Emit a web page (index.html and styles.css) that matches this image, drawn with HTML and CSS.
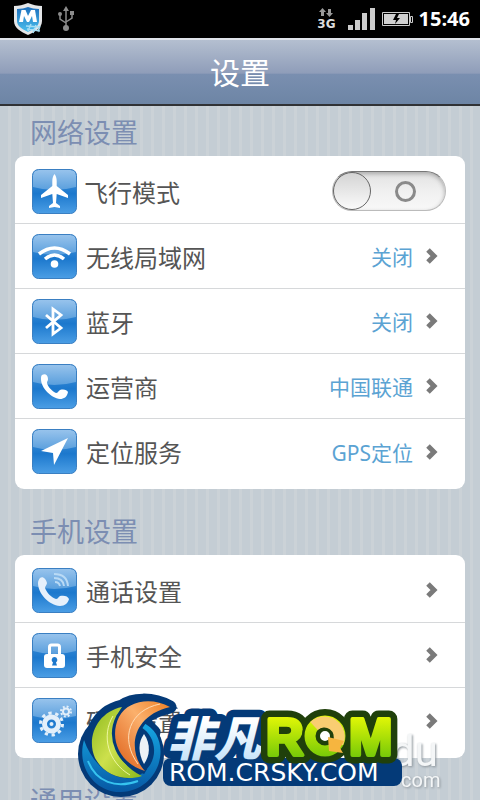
FILE: index.html
```
<!DOCTYPE html>
<html lang="zh-CN">
<head>
  <meta charset="utf-8">
  <meta name="viewport" content="width=device-width, initial-scale=1">
  <title>设置</title>
  <link rel="stylesheet" href="styles.css">
</head>
<body>
  <!-- Status bar -->
  <div class="status-bar">
    <svg class="shield" width="30" height="34" viewBox="0 0 30 34">
      <defs>
        <linearGradient id="shield-fill" x1="0" y1="0" x2="0" y2="1">
          <stop offset="0" stop-color="#1d6fbd"/>
          <stop offset="1" stop-color="#4bc0ee"/>
        </linearGradient>
      </defs>
      <path d="M1 4C6 4 10 3 15 1c5 2 9 3 14 3v15c0 7-7 11-14 14C8 30 1 26 1 19z" fill="#e4e6e8"/>
      <path d="M4 7c4 0 8-1 11-2 3 1 7 2 11 2v12c0 5-5 8-11 11C9 27 4 24 4 19z" fill="url(#shield-fill)"/>
      <path d="M6 20L8.500 8h4l2.500 6 3-6h4l2 12h-4l-1-6-3 6h-2l-3-6-1 6z" fill="#fff"/>
      <path d="M13 24l14 1M14 27l13 2M18 22l-3 7M23 23l-3 8M27 24l-2 6" stroke="#a5def5" stroke-width="1.500"/>
    </svg>
    <svg width="18" height="26" viewBox="0 0 18 26" fill="none" stroke="#8c8c8c" stroke-width="1.500">
      <path d="M9 3v18M3 9v4l6 4M15 8v4l-6 4"/>
      <path d="M9 0l3 5H6z" fill="#8c8c8c" stroke="none"/>
      <circle cx="9" cy="22" r="3" fill="#8c8c8c" stroke="none"/>
      <circle cx="3" cy="8" r="2" fill="#8c8c8c" stroke="none"/>
      <path d="M13 5h4v4h-4z" fill="#8c8c8c" stroke="none"/>
    </svg>
    <div class="status-right">
      <div class="network">
        <svg width="14" height="9" viewBox="0 0 14 9" fill="#999">
          <path d="M3.500 0L7 4H5v4H2V4H0zM10.500 9L7 5h2V1h3v4h2z"/>
        </svg>
        <span>3G</span>
      </div>
      <svg width="28" height="22" viewBox="0 0 28 22" fill="#ccc">
        <path d="M0 17h5v5H0zM7 12h5v10H7zM14 5h5v17h-5zM22 0h5v22h-5z"/>
      </svg>
      <svg width="31" height="16" viewBox="0 0 31 16">
        <path d="M.5 1.500h27v13H.5zM28.500 5.500h2v6h-2z" fill="none" stroke="#ccc"/>
        <path d="M2 3h24v10H2z" fill="#d0d0d0"/>
        <path d="M14 3l-3 6h3l-1 4 5-6h-3l2-4z" fill="#000"/>
      </svg>
      <span class="clock">15:46</span>
    </div>
  </div>

  <header class="title-bar">
    <h1>设置</h1>
  </header>

  <!-- Shared icon background -->
  <svg class="defs" width="0" height="0">
    <defs>
      <linearGradient id="tile-base" x1="0" y1="0" x2="0" y2="1">
        <stop offset="0" stop-color="#4d98dc"/>
        <stop offset=".55" stop-color="#1c78cd"/>
        <stop offset="1" stop-color="#4b9ee5"/>
      </linearGradient>
      <linearGradient id="tile-gloss" x1="0" y1="0" x2="0" y2="1">
        <stop offset="0" stop-color="#97c3ec"/>
        <stop offset="1" stop-color="#5a9fdd"/>
      </linearGradient>
      <symbol id="tile" viewBox="0 0 45 45">
        <rect x=".5" y=".5" width="44" height="44" rx="6" fill="url(#tile-base)"/>
        <path d="M1 18V7q0-6 6-6h31q6 0 6 6v11Q22 24 1 18z" fill="url(#tile-gloss)"/>
        <rect x=".5" y=".5" width="44" height="44" rx="6" fill="none" stroke="#3a7fc2"/>
      </symbol>
    </defs>
  </svg>

  <main class="settings">
    <h2>网络设置</h2>
    <div class="card">
      <div class="row row-switch">
        <svg class="icon" viewBox="0 0 45 45"><use href="#tile"/>
          <path d="M22.500 5c1.500 2 2.200 4 2.200 7v5L36 26v3l-11.300-4-.7 9 4 3v2l-5.500-1-5.500 1v-2l4-3-.7-9L9 29v-3l11.300-9v-5c0-3 .7-5 2.200-7z" fill="#fff"/></svg>
        <label for="airplane">飞行模式</label>
        <input type="checkbox" id="airplane" class="switch">
      </div>
      <a class="row" href="#">
        <svg class="icon" viewBox="0 0 45 45"><use href="#tile"/>
          <g fill="none" stroke="#fff" stroke-width="3.500"><path d="M7 20q15.500-12 31 0M13 25q9.500-8 19 0"/></g>
          <circle cx="22.500" cy="30" r="3.800" fill="#fff"/></svg>
        <span class="name">无线局域网</span>
        <span class="value">关闭</span>
        <svg class="arrow" viewBox="0 0 13 18"><path d="M3 3l6 6-6 6"/></svg>
      </a>
      <a class="row" href="#">
        <svg class="icon" viewBox="0 0 45 45"><use href="#tile"/>
          <path d="M14 16l15 13-8 6V10l8 6-15 13" fill="none" stroke="#fff" stroke-width="2.800"/></svg>
        <span class="name">蓝牙</span>
        <span class="value">关闭</span>
        <svg class="arrow" viewBox="0 0 13 18"><path d="M3 3l6 6-6 6"/></svg>
      </a>
      <a class="row" href="#">
        <svg class="icon" viewBox="0 0 45 45"><use href="#tile"/>
          <path d="M10 11c3-2 6 0 6 4 0 2-1 2-1 4 1 4 5 8 9 10 2 0 2-2 4-3 4-1 7 0 8 2-1 5-4 7-8 7C19 34 9 24 9 15c0-2 0-3 1-4z" fill="#fff"/></svg>
        <span class="name">运营商</span>
        <span class="value">中国联通</span>
        <svg class="arrow" viewBox="0 0 13 18"><path d="M3 3l6 6-6 6"/></svg>
      </a>
      <a class="row" href="#">
        <svg class="icon" viewBox="0 0 45 45"><use href="#tile"/>
          <path d="M36 9L22 36l-1-12L9 22z" fill="#fff"/></svg>
        <span class="name">定位服务</span>
        <span class="value">GPS定位</span>
        <svg class="arrow" viewBox="0 0 13 18"><path d="M3 3l6 6-6 6"/></svg>
      </a>
    </div>

    <h2>手机设置</h2>
    <div class="card">
      <a class="row" href="#">
        <svg class="icon" viewBox="0 0 45 45"><use href="#tile"/>
          <path d="M8 10c3-2 6 1 7 5 0 2-2 3-2 5 2 5 6 9 11 11 2 0 2-2 4-3 4-1 8 0 9 3-1 4-4 7-9 7C17 37 6 26 6 15c0-2 1-4 2-5z" fill="#e6f0fb"/>
          <g fill="none" stroke="#b9daf5" stroke-width="2"><path d="M22 6q13 0 14 12M22 10q9 0 10 8M23 14q4 0 5 4"/></g></svg>
        <span class="name">通话设置</span>
        <svg class="arrow" viewBox="0 0 13 18"><path d="M3 3l6 6-6 6"/></svg>
      </a>
      <a class="row" href="#">
        <svg class="icon" viewBox="0 0 45 45"><use href="#tile"/>
          <path d="M17.500 22v-8q0-2 2-2h6q2 0 2 2v8" fill="none" stroke="#fff" stroke-width="3"/>
          <rect x="12" y="21" width="21" height="14" rx="3" fill="#fff"/>
          <path d="M22.500 24a3 3 0 0 1 1.500 5.500l1 3h-5l1-3a3 3 0 0 1 1.500-5.500z" fill="#1c78cd"/></svg>
        <span class="name">手机安全</span>
        <svg class="arrow" viewBox="0 0 13 18"><path d="M3 3l6 6-6 6"/></svg>
      </a>
      <a class="row" href="#">
        <svg class="icon" viewBox="0 0 45 45"><use href="#tile"/>
          <g fill="none" stroke="#e3effa">
            <circle cx="19.500" cy="26" r="7" stroke-width="5"/>
            <circle cx="19.500" cy="26" r="11" stroke-width="3" stroke-dasharray="3.300 3.610"/>
            <circle cx="34" cy="13.500" r="3" stroke-width="2"/>
            <circle cx="34" cy="13.500" r="5" stroke-width="2" stroke-dasharray="1.930 2"/>
          </g>
          <circle cx="19.500" cy="26" r="2" fill="#e3effa"/></svg>
        <span class="name">硬件设置</span>
        <svg class="arrow" viewBox="0 0 13 18"><path d="M3 3l6 6-6 6"/></svg>
      </a>
    </div>

    <h2>通用设置</h2>
  </main>

  <!-- Site logos over the page -->
  <svg class="site-logo" width="376" height="110" viewBox="74 690 376 110">
    <defs>
      <linearGradient id="ice" x1="0" y1="0" x2="0" y2="1">
        <stop offset=".3" stop-color="#fff"/>
        <stop offset="1" stop-color="#b7dcf8"/>
      </linearGradient>
      <linearGradient id="lime" gradientUnits="userSpaceOnUse" x1="0" y1="714" x2="0" y2="758">
        <stop offset="0" stop-color="#e9fa06"/>
        <stop offset="1" stop-color="#74c808"/>
      </linearGradient>
      <linearGradient id="leaf" x1="0" y1="0" x2="1" y2="1">
        <stop offset="0" stop-color="#8dba1e"/>
        <stop offset=".5" stop-color="#cde04c"/>
        <stop offset="1" stop-color="#8ab91c"/>
      </linearGradient>
      <linearGradient id="orange" x1="1" y1="0" x2="0" y2="1">
        <stop offset="0" stop-color="#ee7f22"/>
        <stop offset=".4" stop-color="#fbb06c"/>
        <stop offset="1" stop-color="#dc5c16"/>
      </linearGradient>
      <linearGradient id="sea" x1="0" y1="0" x2="0" y2="1">
        <stop offset="0" stop-color="#16a9e4"/>
        <stop offset="1" stop-color="#0758a4"/>
      </linearGradient>
    </defs>

    <g class="baidu">
      <text x="391" y="766" font-size="42">du</text>
      <text x="401" y="787" font-size="20">com</text>
    </g>

    <path d="M122 706C96 712 86 738 94 758l50 14 10-40-12-12c6-6 16-10 28-13-18-10-38-8-48-1z" fill="#043a78" stroke="#043a78" stroke-width="13" stroke-linejoin="round"/>
    <circle cx="121" cy="754" r="43" fill="#043a78"/>
    <path d="M84 740c-8 28 12 53 37 52 32-1 48-35 35-58-3-5-8-9-14-12l-1 5c13 8 17 25 9 38-16 25-53 13-66-25z" fill="url(#sea)"/>
    <path d="M88 761c8 21 28 28 50 20" fill="none" stroke="#36c3ef" stroke-width="2"/>
    <path d="M144 734c-6 8-6 19 0 30 6-8 7-20 0-30z" fill="#edf2f6"/>
    <path d="M122 707C97 712 86 738 95 758c9 17 29 24 47 18-25-11-38-43-20-69z" fill="url(#leaf)"/>
    <path d="M113 716c-12 20-5 46 17 59" fill="none" stroke="#eef7a0"/>
    <path d="M170 707c-18-10-42-7-51 10-10 20-1 46 26 54-16-16-17-54 25-64z" fill="url(#orange)" stroke="#043a78" stroke-width="6" paint-order="stroke"/>
    <path d="M160 704c-30 6-41 34-22 60" fill="none" stroke="#ffdcb4"/>

    <rect x="163" y="758" width="239" height="28" rx="8" fill="#043a78"/>
    <text class="cn" x="167" y="756" fill="url(#ice)" stroke="#043a78" stroke-width="15">非凡</text>
    <g class="rom" stroke="#20400b" stroke-width="17">
      <text x="266" y="755">R</text>
      <circle cx="325" cy="736" r="17" fill="none" stroke-width="20"/>
      <text x="349" y="755">M</text>
    </g>
    <g class="rom" fill="url(#lime)" stroke="url(#lime)" stroke-width="4">
      <text x="266" y="755">R</text>
      <circle cx="325" cy="736" r="14" fill="#fff" stroke="#20400b" stroke-width="18"/>
      <circle cx="325" cy="736" r="15" fill="none" stroke-width="11"/>
      <text x="349" y="755">M</text>
    </g>
    <path d="M314 726a15 15 0 0 1 24 17" fill="none" stroke="#f9cd72" stroke-width="11"/>
    <path d="M328 737l1 14 14 2-3-5 4-7z" fill="#f6b53f"/>
    <text class="url" x="169" y="781">ROM.CRSKY.COM</text>
  </svg>
</body>
</html>
```
FILE: styles.css
```
* {
  box-sizing: border-box;
}

body {
  margin: 0;
  height: 100vh;
  display: flex;
  flex-direction: column;
  position: relative;
  overflow: hidden;
  font-family: "Noto Sans", "Noto Sans CJK SC", sans-serif;
  color: #555;
  background-color: #c4cdd4;
  background-image: repeating-linear-gradient(90deg, transparent 0 8px, #cbd2d7 8px 11px);
}

.defs {
  position: absolute;
}

/* Status bar */
.status-bar {
  flex: none;
  height: 38px;
  padding: 0 10px 0 13px;
  display: flex;
  align-items: center;
  gap: 14px;
  background: #000;
}

.status-right {
  margin-left: auto;
  display: flex;
  align-items: center;
  gap: 6px;
}

.network {
  display: flex;
  flex-direction: column;
  align-items: center;
  gap: 1px;
  margin-right: 6px;
  color: #ddd;
  font: bold 12px/12px "DejaVu Sans", sans-serif;
}

.clock {
  color: #fff;
  font: bold 20px/24px "Open Sans", sans-serif;
}

/* Title bar */
.title-bar {
  flex: none;
  height: 68px;
  border-top: 2px solid #dfe3ea;
  border-bottom: 2px solid #303235;
  background: linear-gradient(#b4bfd0, #8f9db9 52%, #7a8fb0 53%, #6d85a5);
}

.title-bar h1 {
  margin: 0;
  font-size: 30px;
  font-weight: normal;
  line-height: 66px;
  text-align: center;
  color: #fff;
}

/* Settings list */
.settings {
  flex: 1;
  min-height: 0;
  padding: 4px 15px 0;
  overflow: hidden;
}

.settings h2 {
  margin: 0 0 0 15px;
  font-size: 27px;
  font-weight: normal;
  line-height: 46px;
  color: #7c8eb2;
}

.card {
  margin-bottom: 20px;
  padding: 3px 0 5px;
  border-radius: 9px;
  background: #fff;
}

.row {
  display: flex;
  align-items: center;
  gap: 9px;
  height: 65px;
  padding: 0 27px 0 17px;
  border-bottom: 1px solid #d6d8da;
  font-size: 24px;
  color: inherit;
  text-decoration: none;
}

.row:last-child {
  border-bottom: none;
}

.row-switch {
  gap: 7px;
  padding-right: 19px;
}

.icon {
  flex: none;
  width: 45px;
  height: 45px;
}

.name {
  flex: 1;
}

.value {
  margin-right: 3px;
  font-size: 21px;
  color: #5ba3d3;
}

.arrow {
  width: 13px;
  height: 18px;
  fill: none;
  stroke: #7a7a7a;
  stroke-width: 5;
}

/* Switch */
.switch {
  appearance: none;
  width: 114px;
  height: 40px;
  margin: 0 0 0 auto;
  display: flex;
  align-items: center;
  gap: 24px;
  border: 1px solid #bbb;
  border-top-color: #777;
  border-radius: 20px;
  background: linear-gradient(#e2e2e2, #f0f0f0 50%, #f8f8f8);
  box-shadow: inset 0 2px 4px #aaa;
}

.switch::before {
  content: "";
  box-sizing: border-box;
  width: 38px;
  height: 38px;
  border: 1px solid #666;
  border-radius: 50%;
  background: linear-gradient(#d4d4d4, #fafafa);
}

.switch::after {
  content: "";
  box-sizing: border-box;
  width: 21px;
  height: 21px;
  border: 3px solid #8a8a8a;
  border-radius: 50%;
}

/* Logo */
.site-logo {
  position: absolute;
  left: 74px;
  bottom: 0;
}

.baidu {
  font-family: Roboto, sans-serif;
  fill: #f4f6f7;
  filter: drop-shadow(1px 1px 1px #8d959b);
}

.cn {
  font: italic 900 47px "Noto Sans CJK SC", sans-serif;
  paint-order: stroke;
  stroke-linejoin: round;
}

.rom {
  font: bold 52px "Liberation Sans", sans-serif;
  stroke-linejoin: round;
}

.url {
  font: 25px "DejaVu Sans", sans-serif;
  fill: #fff;
}
```
